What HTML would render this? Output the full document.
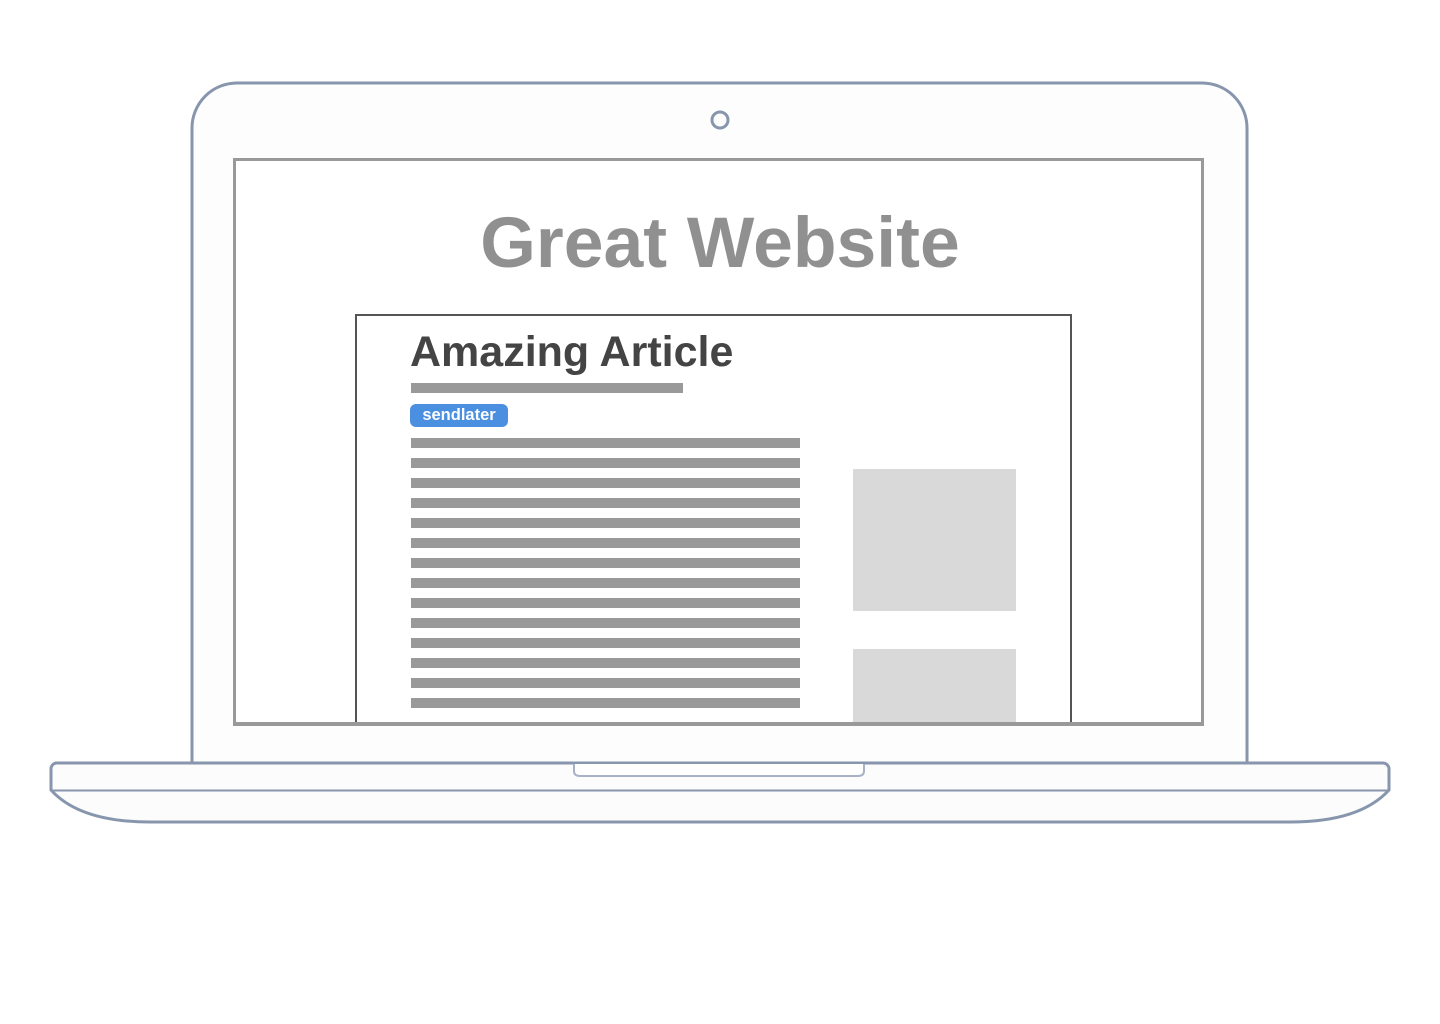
<!DOCTYPE html>
<html><head><style>
body{margin:0;width:1440px;height:1024px;background:#fff;position:relative;overflow:hidden;font-family:"Liberation Sans",Arial,sans-serif}
.a{position:absolute}
</style></head><body>
<svg class="a" style="left:0;top:0" width="1440" height="1024">
<path d="M192 763 V128 A45 45 0 0 1 237 83 H1202 A45 45 0 0 1 1247 128 V763" fill="#fdfdfe" stroke="#8796ac" stroke-width="3"/>
<circle cx="720" cy="120" r="8" fill="none" stroke="#8796ac" stroke-width="3"/>
<path d="M56 763 H1383 A6 6 0 0 1 1389 769 V790 Q1360 822 1290 822 H150 Q80 822 51 790 V769 A6 6 0 0 1 56 763 Z" fill="#fcfcfd" stroke="#8796ac" stroke-width="3"/>
<line x1="51" y1="790.5" x2="1388" y2="790.5" stroke="#8796ac" stroke-width="2"/>
<path d="M574 764 V771 Q574 776 580 776 H858 Q864 776 864 771 V764" fill="#fff" stroke="#a7b3c4" stroke-width="2"/>
</svg>
<div class="a" style="left:233px;top:158px;width:965px;height:562px;border:3px solid #999;background:#fff"></div>
<div class="a" style="left:236px;top:202px;width:968px;text-align:center;font-size:71.5px;font-weight:bold;color:#909090">Great Website</div>
<div class="a" style="left:355px;top:314px;width:713px;height:408px;border:2px solid #555;border-bottom:none;background:#fff"></div>
<div class="a" style="left:410px;top:328px;font-size:43px;font-weight:bold;color:#444">Amazing Article</div>
<div class="a" style="left:411px;top:383px;width:272px;height:10px;background:#999"></div>
<div class="a" style="left:410px;top:404px;width:98px;height:23px;background:#4a8fe0;border-radius:6px;color:#fff;font-weight:bold;font-size:16.5px;line-height:23px;text-align:center">sendlater</div>
<div class="a" style="left:411px;top:438px;width:389px;height:272px;background:repeating-linear-gradient(#999 0 10px,#fff 10px 20px)"></div>
<div class="a" style="left:853px;top:469px;width:163px;height:142px;background:#d9d9d9"></div>
<div class="a" style="left:853px;top:649px;width:163px;height:73px;background:#d9d9d9"></div>
<div class="a" style="left:233px;top:722px;width:971px;height:3px;background:#999"></div>
</body></html>
